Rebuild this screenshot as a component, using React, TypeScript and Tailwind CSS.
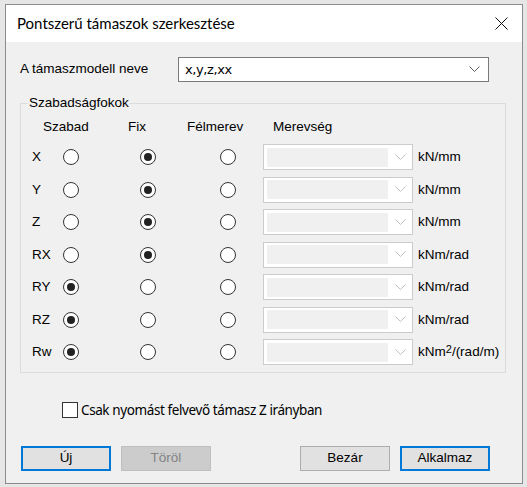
import React from 'react';

type Choice = 'szabad' | 'fix' | 'felmerev';

const rows: { label: string; checked: Choice; unit: React.ReactNode }[] = [
  { label: 'X', checked: 'fix', unit: 'kN/mm' },
  { label: 'Y', checked: 'fix', unit: 'kN/mm' },
  { label: 'Z', checked: 'fix', unit: 'kN/mm' },
  { label: 'RX', checked: 'fix', unit: 'kNm/rad' },
  { label: 'RY', checked: 'szabad', unit: 'kNm/rad' },
  { label: 'RZ', checked: 'szabad', unit: 'kNm/rad' },
  {
    label: 'Rw',
    checked: 'szabad',
    unit: (
      <>
        kNm<sup className="text-[11px] relative -top-[3px]">2</sup>/(rad/m)
      </>
    ),
  },
];

function Radio({ on }: { on: boolean }) {
  return (
    <span className="w-[16px] h-[16px] rounded-full border border-[#333] bg-white flex items-center justify-center shrink-0">
      {on && <span className="w-[8px] h-[8px] rounded-full bg-[#222]" />}
    </span>
  );
}

function Chevron({ color }: { color: string }) {
  return (
    <svg width="11" height="7" viewBox="0 0 11 7" fill="none">
      <polyline points="0.5,0.5 5.5,5.5 10.5,0.5" stroke={color} strokeWidth="1" />
    </svg>
  );
}

function DisabledCombo() {
  return (
    <div className="w-[150px] h-[26px] border border-[#cccccc] bg-white flex items-center pl-[3px] pr-[6px] shrink-0">
      <div className="w-[121px] h-[19px] bg-[#f0f0f0]" />
      <div className="ml-auto">
        <Chevron color="#bfbfbf" />
      </div>
    </div>
  );
}

function Btn({ children, kind }: { children: React.ReactNode; kind: 'default' | 'focus' | 'disabled' }) {
  const cls =
    kind === 'focus'
      ? 'border-2 border-[#0078d7] bg-[#e1e1e1] text-black'
      : kind === 'disabled'
        ? 'border border-[#bfbfbf] bg-[#cccccc] text-[#838383]'
        : 'border border-[#adadad] bg-[#e1e1e1] text-black';
  return (
    <button type="button" className={`w-[90px] h-[25px] flex items-center justify-center text-[13.5px] ${cls}`}>
      {children}
    </button>
  );
}

export default function App() {
  return (
    <div className="w-[527px] h-[487px] bg-[#e6e6e6] pl-[5px] pt-[4px] font-['Liberation_Sans',Arial,sans-serif] text-black">
      <div className="w-[518px] h-[480px] border border-[#8c8c8c] bg-[#f0f0f0] flex flex-col">
        {/* title bar */}
        <div className="h-[37px] bg-white flex items-center justify-between pl-[11px] pr-[14px] shrink-0">
          <span className="text-[15px] font-['Lato','Noto_Sans',sans-serif]">
            Pontszerű támaszok szerkesztése
          </span>
          <svg width="13" height="13" viewBox="0 0 13 13">
            <path d="M0.5 0.5 L12.5 12.5 M12.5 0.5 L0.5 12.5" stroke="#111" strokeWidth="1" />
          </svg>
        </div>

        {/* model name */}
        <div className="flex items-center pl-[14px] mt-[15px]">
          <span className="w-[158px] text-[13.5px]">A támaszmodell neve</span>
          <div className="w-[311px] h-[25px] border border-[#7a7a7a] bg-white flex items-center pl-[6px] pr-[8px]">
            <span className="text-[13px] font-['DejaVu_Sans',Verdana,sans-serif] tracking-[-0.4px]">x,y,z,xx</span>
            <div className="ml-auto">
              <Chevron color="#606060" />
            </div>
          </div>
        </div>

        {/* group box */}
        <div className="relative ml-[14px] mt-[21px] w-[486px] h-[270px] border border-[#dcdcdc] pt-[10px]">
          <span className="absolute -top-[9px] left-[7px] bg-[#f0f0f0] px-[1px] text-[13.5px] leading-[16px]">
            Szabadságfokok
          </span>
          <div className="h-[27px] flex items-center pl-[22px] text-[13.5px]">
            <span className="w-[85px]">Szabad</span>
            <span className="w-[59px]">Fix</span>
            <span className="w-[86px]">Félmerev</span>
            <span>Merevség</span>
          </div>
          {rows.map((r) => (
            <div key={r.label} className="h-[32.5px] flex items-center pl-[11px] text-[13.5px]">
              <span className="w-[31px]">{r.label}</span>
              <Radio on={r.checked === 'szabad'} />
              <span className="ml-[61px]">
                <Radio on={r.checked === 'fix'} />
              </span>
              <span className="ml-[64px]">
                <Radio on={r.checked === 'felmerev'} />
              </span>
              <span className="ml-[27px]">
                <DisabledCombo />
              </span>
              <span className="ml-[5px] whitespace-nowrap">{r.unit}</span>
            </div>
          ))}
        </div>

        {/* checkbox */}
        <div className="flex items-center ml-[56px] mt-[29px] h-[16px]">
          <span className="w-[16px] h-[16px] border border-[#333] bg-white shrink-0" />
          <span className="ml-[3px] text-[13.5px] font-['Noto_Sans','Open_Sans',sans-serif] tracking-[-0.4px]">
            Csak nyomást felvevő támasz Z irányban
          </span>
        </div>

        {/* buttons */}
        <div className="flex items-center pl-[15px] mt-[28px]">
          <Btn kind="focus">Új</Btn>
          <span className="ml-[10px]">
            <Btn kind="disabled">Töröl</Btn>
          </span>
          <span className="ml-[89px]">
            <Btn kind="default">Bezár</Btn>
          </span>
          <span className="ml-[10px]">
            <Btn kind="focus">Alkalmaz</Btn>
          </span>
        </div>
      </div>
    </div>
  );
}
